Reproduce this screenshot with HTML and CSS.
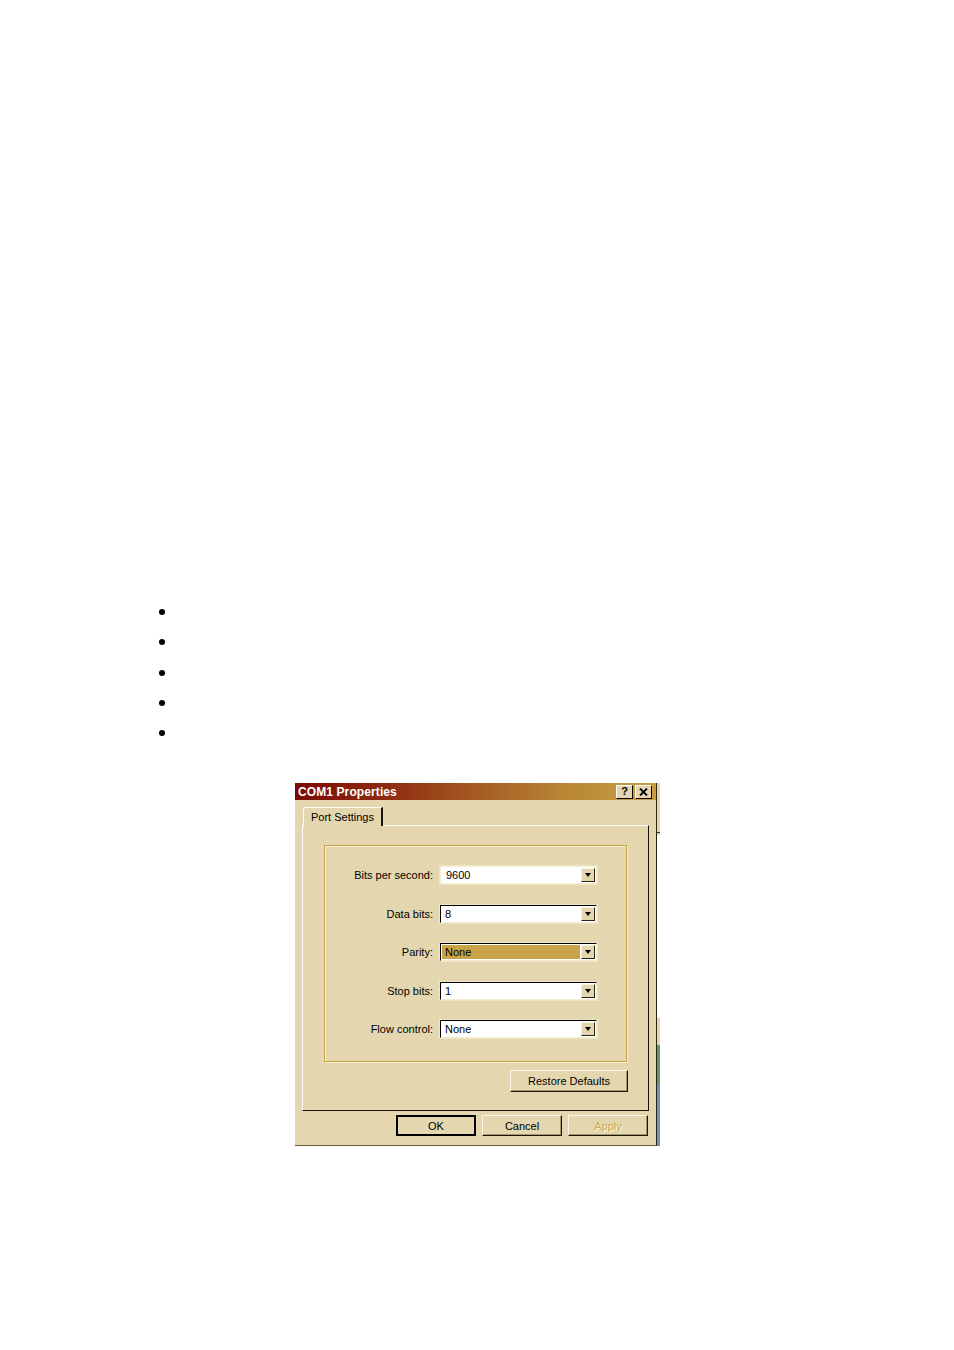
FILE: index.html
```html
<!DOCTYPE html>
<html>
<head>
<meta charset="utf-8">
<link rel="stylesheet" href="styles.css">
</head>
<body>
<div class="page">
  <ul class="bullets">
    <li></li><li></li><li></li><li></li><li></li>
  </ul>
  <div class="shot">
    <div class="dialog">
      <div class="titlebar">
        <span class="title">COM1 Properties</span>
        <span class="tbtns">
          <span class="tbtn">?</span>
          <span class="tbtn">
            <svg width="9" height="8" viewBox="0 0 9 8"><path d="M1 0.5 L8 7.5 M8 0.5 L1 7.5" stroke="#000" stroke-width="1.8"/></svg>
          </span>
        </span>
      </div>
      <div class="tabs"><div class="tab">Port Settings</div></div>
      <div class="panel">
        <div class="group">
          <div class="row">
            <span class="label">Bits per second:</span>
            <span class="combo plain"><span class="value">9600</span><span class="drop"><span class="arrow"></span></span></span>
          </div>
          <div class="row">
            <span class="label">Data bits:</span>
            <span class="combo"><span class="value">8</span><span class="drop"><span class="arrow"></span></span></span>
          </div>
          <div class="row">
            <span class="label">Parity:</span>
            <span class="combo"><span class="value selected">None</span><span class="drop"><span class="arrow"></span></span></span>
          </div>
          <div class="row">
            <span class="label">Stop bits:</span>
            <span class="combo"><span class="value">1</span><span class="drop"><span class="arrow"></span></span></span>
          </div>
          <div class="row">
            <span class="label">Flow control:</span>
            <span class="combo"><span class="value">None</span><span class="drop"><span class="arrow"></span></span></span>
          </div>
        </div>
        <div class="restore-row"><span class="btn restore">Restore Defaults</span></div>
      </div>
      <div class="footer">
        <span class="btn default">OK</span>
        <span class="btn">Cancel</span>
        <span class="btn disabled">Apply</span>
      </div>
    </div>
    <div class="strip"></div>
  </div>
</div>
</body>
</html>
```

FILE: styles.css
```css
html, body {
  margin: 0;
  padding: 0;
  background: #ffffff;
}
.page {
  width: 954px;
  height: 1350px;
  padding-top: 597px;
  box-sizing: border-box;
  font-family: "Liberation Sans", Arial, sans-serif;
}
.bullets {
  list-style: none;
  margin: 0;
  padding: 0 0 0 159px;
}
.bullets li {
  height: 30.25px;
  display: flex;
  align-items: center;
}
.bullets li::before {
  content: "";
  width: 6px;
  height: 6px;
  border-radius: 50%;
  background: #000;
}
.shot {
  margin-top: 34.75px;
  margin-left: 295px;
  display: flex;
  width: 365px;
}
.dialog {
  width: 361px;
  height: 362px;
  background: #e4d7af;
  border-right: 1px solid #2a2416;
  border-bottom: 1px solid #6a5c38;
  display: flex;
  flex-direction: column;
  font-size: 11px;
  color: #000;
}
.strip {
  width: 3px;
  height: 363px;
  background: linear-gradient(to bottom,
    #e4d7af 0, #e4d7af 49px, #3a3020 49px, #3a3020 50px,
    #e4d7af 50px, #e4d7af 52px, #ffffff 52px, #ffffff 235px,
    #e4d7af 235px, #e4d7af 262px, #5e9a70 262px, #5e9a70 302px,
    #6f8fc0 302px, #6f8fc0 363px);
}
.titlebar {
  height: 17px;
  display: flex;
  align-items: center;
  justify-content: space-between;
  background: linear-gradient(to right, #7c0a04 0%, #8e2a0e 25%, #a45a22 50%, #b98636 75%, #c8a042 100%);
  padding: 0 4px 0 3px;
}
.title {
  color: #fff;
  font-weight: bold;
  font-size: 12px;
  letter-spacing: 0.1px;
}
.tbtns {
  display: flex;
  gap: 2px;
}
.tbtn {
  width: 15px;
  height: 12px;
  background: #e4d7af;
  border: 1px solid;
  border-color: #fff #000 #000 #fff;
  display: flex;
  align-items: center;
  justify-content: center;
  font-weight: bold;
  font-size: 11px;
  line-height: 1;
}
.tabs {
  height: 25px;
  display: flex;
  align-items: flex-end;
  padding-left: 8px;
}
.tab {
  position: relative;
  z-index: 1;
  width: 70px;
  height: 18px;
  margin-bottom: -1px;
  padding-left: 7px;
  background: #e4d7af;
  border-top: 1px solid #fff;
  border-left: 1px solid #fff;
  border-right: 2px solid #1a1408;
  border-top-left-radius: 2px;
  display: flex;
  align-items: center;
}
.panel {
  margin-left: 7px;
  border-top: 1px solid #fff;
  border-left: 1px solid #fff;
  border-right: 1px solid #1a1408;
  border-bottom: 1px solid #1a1408;
  box-sizing: border-box;
  width: 347px;
  height: 286px;
  display: flex;
  flex-direction: column;
}
.group {
  margin-top: 19px;
  margin-left: 21px;
  width: 303px;
  height: 217px;
  box-sizing: border-box;
  border: 1px solid #c8a448;
  box-shadow: inset 1px 1px 0 #f6efd6, 1px 1px 0 #f6efd6;
  display: flex;
  flex-direction: column;
  padding-top: 20px;
  gap: 20.5px;
}
.row {
  display: flex;
  align-items: center;
  height: 18px;
}
.label {
  width: 108px;
  text-align: right;
  margin-right: 7px;
  white-space: nowrap;
}
.combo {
  width: 157px;
  height: 18px;
  box-sizing: border-box;
  background: #fff;
  border: 1px solid;
  border-color: #000 #f4ecd0 #f4ecd0 #000;
  box-shadow: 0 0 0 1px #efe5c4;
  display: flex;
  align-items: stretch;
  padding: 1px;
}
.combo.plain {
  border-color: #f4ecd0;
}
.value {
  flex: 1;
  display: flex;
  align-items: center;
  padding-left: 3px;
}
.combo.plain .value {
  padding-left: 4px;
}
.value.selected {
  background: #c8a448;
  margin-right: 1px;
}
.drop {
  width: 12px;
  background: #e4d7af;
  border: 1px solid;
  border-color: #f8f2dc #2a2416 #2a2416 #f8f2dc;
  display: flex;
  align-items: center;
  justify-content: center;
}
.arrow {
  width: 0;
  height: 0;
  border-left: 3.5px solid transparent;
  border-right: 3.5px solid transparent;
  border-top: 4px solid #000;
}
.restore-row {
  display: flex;
  justify-content: flex-end;
  padding-right: 20px;
  margin-top: 8px;
}
.btn {
  height: 21px;
  box-sizing: border-box;
  background: #e4d7af;
  border: 1px solid;
  border-color: #fbf6e4 #1a1408 #1a1408 #fbf6e4;
  box-shadow: inset -1px -1px 0 #a8976a;
  display: flex;
  align-items: center;
  justify-content: center;
  width: 80px;
}
.btn.restore {
  width: 118px;
  height: 22px;
}
.footer {
  display: flex;
  justify-content: flex-end;
  gap: 6px;
  margin-top: 4px;
  padding-right: 8px;
}
.btn.default {
  border: 2px solid #000;
  box-shadow: none;
}
.btn.disabled {
  color: #c4a85a;
  text-shadow: 1px 1px 0 #fbf6e4;
}
```
